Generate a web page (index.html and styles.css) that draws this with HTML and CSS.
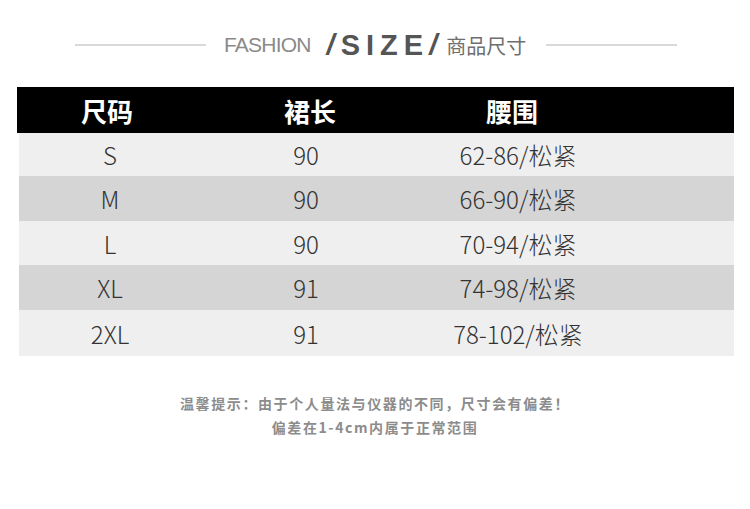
FILE: index.html
```html
<!DOCTYPE html>
<html lang="zh-CN">
<head>
<meta charset="utf-8">
<title>尺码表</title>
<link rel="stylesheet" href="styles.css">
</head>
<body>
<div class="page">
  <div class="title">
    <span class="rule"></span>
    <div class="title-text">
      <span class="fashion">FASHION</span>
      <span class="size"><i class="slash">/</i>SIZE<i class="slash">/</i></span>
      <span class="cn">商品尺寸</span>
    </div>
    <span class="rule"></span>
  </div>

  <div class="table">
    <div class="thead">
      <span>尺码</span><span>裙长</span><span>腰围</span><span></span>
    </div>
    <div class="row light r1"><span>S</span><span>90</span><span>62-86/松紧</span><span></span></div>
    <div class="row dark r2"><span>M</span><span>90</span><span>66-90/松紧</span><span></span></div>
    <div class="row light r3"><span>L</span><span>90</span><span>70-94/松紧</span><span></span></div>
    <div class="row dark r4"><span>XL</span><span>91</span><span>74-98/松紧</span><span></span></div>
    <div class="row light r5"><span>2XL</span><span>91</span><span>78-102/松紧</span><span></span></div>
  </div>

  <div class="note">
    <p>温馨提示：由于个人量法与仪器的不同，尺寸会有偏差！</p>
    <p>偏差在1-4cm内属于正常范围</p>
  </div>
</div>
</body>
</html>
```

FILE: styles.css
```css
html, body {
  margin: 0;
  padding: 0;
  background: #ffffff;
}

.page {
  width: 750px;
  height: 509px;
  font-family: "Noto Sans CJK SC", "Noto Sans", sans-serif;
}

.title {
  display: flex;
  align-items: center;
  padding: 24px 0 0 75px;
  height: 42px;
  box-sizing: content-box;
}

.rule {
  width: 131px;
  height: 2px;
  background: #d9d9d9;
}

.title-text {
  display: flex;
  align-items: center;
  width: 340px;
  padding-left: 18px;
  box-sizing: border-box;
}

.fashion {
  font-family: "Liberation Sans", sans-serif;
  font-size: 21px;
  letter-spacing: -0.8px;
  color: #8a8a8a;
}

.size {
  font-family: "Liberation Sans", sans-serif;
  font-weight: bold;
  font-size: 29px;
  letter-spacing: 6px;
  color: #555555;
  margin-left: 16px;
}

.slash {
  font-style: italic;
}

.cn {
  font-size: 20px;
  color: #6e6e6e;
  margin-left: 3px;
}

.table {
  margin-top: 21px;
  margin-left: 17px;
  width: 717px;
}

.thead,
.row {
  display: grid;
  align-items: center;
  text-align: center;
}

.thead {
  grid-template-columns: 180px 226px 178px 1fr;
  height: 46px;
  background: #000000;
  color: #ffffff;
  font-weight: bold;
  font-size: 26px;
}

.row {
  grid-template-columns: 182px 210px 214px 1fr;
  margin-left: 2px;
  font-size: 24px;
  font-weight: 300;
  color: #333333;
}

.light { background: #efefef; }
.dark { background: #d5d5d5; }

.r1 { height: 43px; }
.r2 { height: 45px; }
.r3 { height: 44px; }
.r4 { height: 45px; }
.r5 { height: 46px; }

.note {
  margin-top: 35px;
  text-align: center;
  color: #8c8c8c;
  font-size: 14px;
  font-weight: bold;
  letter-spacing: 1.6px;
}

.note p {
  margin: 0;
  line-height: 24px;
}
```
